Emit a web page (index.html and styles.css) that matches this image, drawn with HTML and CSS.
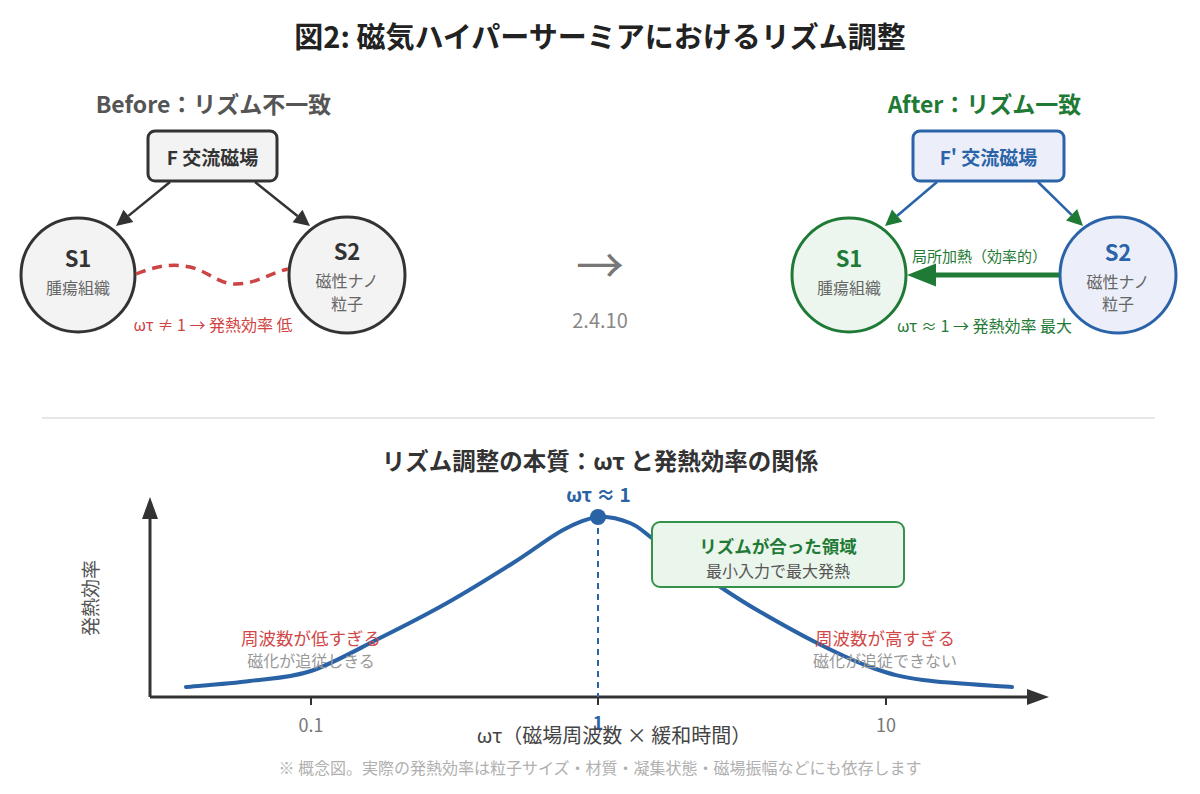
FILE: index.html
```html
<!DOCTYPE html>
<html lang="ja">
<head>
<meta charset="utf-8">
<title>図2: 磁気ハイパーサーミアにおけるリズム調整</title>
<link rel="stylesheet" href="styles.css">
</head>
<body>
<main class="page">
  <h1 class="title">図2: 磁気ハイパーサーミアにおけるリズム調整</h1>

  <section class="compare">
    <svg class="diagram" width="430" height="345" viewBox="0 55 430 345">
      <text class="head head-before" x="213.5" y="103">Before：リズム不一致</text>

      <rect class="box box-before" x="148" y="131" width="129" height="50" rx="7"/>
      <text class="box-label label-dark" x="212.5" y="156">F 交流磁場</text>

      <line class="link-dark" x1="170" y1="182" x2="128.4" y2="215.9"/>
      <polygon class="head-dark" points="116,226 133.4,222.1 123.4,209.7"/>
      <line class="link-dark" x1="255" y1="182" x2="297.5" y2="216"/>
      <polygon class="head-dark" points="310,226 292.5,222.2 302.5,209.8"/>

      <circle class="node node-before" cx="78" cy="275" r="57"/>
      <circle class="node node-before" cx="347" cy="275" r="58"/>

      <path class="wave" d="M136,274 C156,266 172,263 190,267 C210,272 218,284 236,284 C256,284 270,273 288,269"/>

      <text class="node-name label-dark" x="78" y="257">S1</text>
      <text class="node-sub" x="78" y="287">腫瘍組織</text>
      <text class="node-name label-dark" x="347" y="250">S2</text>
      <text class="node-sub" x="347" y="280">磁性ナノ</text>
      <text class="node-sub" x="347" y="303">粒子</text>

      <text class="edge-note note-red" x="213" y="324">ωτ ≠ 1 → 発熱効率 低</text>
    </svg>

    <div class="transition">
      <span class="transition-arrow">→</span>
      <span class="transition-label">2.4.10</span>
    </div>

    <svg class="diagram" width="430" height="345" viewBox="770 55 430 345">
      <text class="head head-after" x="984.5" y="103">After：リズム一致</text>

      <rect class="box box-after" x="913" y="131" width="151" height="50" rx="7"/>
      <text class="box-label label-blue" x="988.5" y="156">F' 交流磁場</text>

      <line class="link-blue" x1="937" y1="182" x2="897.2" y2="215.7"/>
      <polygon class="head-green" points="885,226 902.4,221.8 892,209.6"/>
      <line class="link-blue" x1="1038" y1="182" x2="1071.6" y2="214.8"/>
      <polygon class="head-green" points="1083,226 1066,220.5 1077.2,209.1"/>

      <circle class="node node-green" cx="849" cy="275" r="57"/>
      <circle class="node node-blue" cx="1118" cy="275" r="58"/>

      <line class="heat-line" x1="1059" y1="275" x2="932" y2="275"/>
      <polygon class="head-green" points="907,275 936,263.5 936,286.5"/>

      <text class="edge-note edge-note-small note-green" x="979.5" y="255">局所加熱（効率的）</text>

      <text class="node-name label-green" x="849" y="257">S1</text>
      <text class="node-sub" x="849" y="287">腫瘍組織</text>
      <text class="node-name label-blue" x="1118" y="251">S2</text>
      <text class="node-sub" x="1118" y="281">磁性ナノ</text>
      <text class="node-sub" x="1118" y="303">粒子</text>

      <text class="edge-note note-green" x="984.5" y="325">ωτ ≈ 1 → 発熱効率 最大</text>
    </svg>
  </section>

  <div class="divider"></div>

  <h2 class="chart-title">リズム調整の本質：ωτ と発熱効率の関係</h2>

  <svg class="chart" width="1200" height="278" viewBox="0 474 1200 278">
    <line class="axis" x1="150" y1="697" x2="150" y2="516"/>
    <polygon class="axis-head" points="150,497 142,519 158,519"/>
    <line class="axis" x1="150" y1="697" x2="1030" y2="697"/>
    <polygon class="axis-head" points="1049,697 1027,689 1027,705"/>

    <line class="tick" x1="311" y1="697" x2="311" y2="705"/>
    <line class="tick" x1="598" y1="697" x2="598" y2="705"/>
    <line class="tick" x1="886" y1="697" x2="886" y2="705"/>

    <line class="peak-guide" x1="598" y1="517" x2="598" y2="697"/>

    <path class="curve" d="M186,687 C196.7,686 229.2,683.7 250,681 C270.8,678.3 289.3,678.2 311,671 C332.7,663.8 357.3,649.3 380,638 C402.7,626.7 424.8,615.5 447,603 C469.2,590.5 493.7,575.2 513,563 C532.3,550.8 548.8,537.7 563,530 C577.2,522.3 586.8,518.2 598,517 C609.2,515.8 621,519.5 630,523 C639,526.5 642.5,531.2 652,538 C661.5,544.8 675.3,555.7 687,564 C698.7,572.3 710.3,580.3 722,588 C733.7,595.7 741.2,600.8 757,610 C772.8,619.2 797.7,633.3 817,643 C836.3,652.7 855.3,661.8 873,668 C890.7,674.2 899.8,676.8 923,680 C946.2,683.2 997.2,685.8 1012,687"/>

    <circle class="peak-dot" cx="598" cy="517" r="8"/>
    <text class="peak-label" x="598.5" y="493">ωτ ≈ 1</text>

    <rect class="zone" x="652" y="522" width="252" height="65" rx="8"/>
    <text class="zone-title" x="778" y="545">リズムが合った領域</text>
    <text class="zone-sub" x="778" y="570">最小入力で最大発熱</text>

    <text class="range-title" x="311" y="637">周波数が低すぎる</text>
    <text class="range-sub" x="311" y="660">磁化が追従しきる</text>
    <text class="range-title" x="885" y="637">周波数が高すぎる</text>
    <text class="range-sub" x="885" y="660">磁化が追従できない</text>

    <text class="tick-label" x="311" y="724">0.1</text>
    <text class="tick-label tick-label-key" x="598" y="722">1</text>
    <text class="tick-label" x="886" y="724">10</text>

    <text class="axis-label axis-label-y" x="89" y="598" transform="rotate(-90 89 598)">発熱効率</text>
    <text class="axis-label axis-label-x" x="614" y="734">ωτ（磁場周波数 × 緩和時間）</text>
  </svg>

  <p class="note">※ 概念図。実際の発熱効率は粒子サイズ・材質・凝集状態・磁場振幅などにも依存します</p>
</main>
</body>
</html>
```

FILE: styles.css
```css
html, body {
  margin: 0;
  padding: 0;
  background: #ffffff;
}

body {
  font-family: "Noto Sans CJK JP", "Noto Sans", sans-serif;
  color: #333333;
}

.page {
  width: 1200px;
  height: 794px;
  overflow: hidden;
}

.title {
  margin: 0;
  padding-top: 15px;
  font-size: 29px;
  line-height: 40px;
  font-weight: 700;
  text-align: center;
  color: #222222;
}

.compare {
  display: flex;
  height: 345px;
}

.diagram {
  display: block;
  flex: none;
}

.transition {
  width: 340px;
  flex: none;
  display: flex;
  flex-direction: column;
  align-items: center;
  padding-top: 183px;
  gap: 22px;
  box-sizing: border-box;
}

.transition-arrow {
  font-size: 48px;
  line-height: 48px;
  color: #777777;
}

.transition-label {
  font-size: 20px;
  line-height: 24px;
  color: #888888;
}

.divider {
  height: 2px;
  margin: 17px 45px 0 42px;
  background: #e6e6e6;
}

.chart-title {
  margin: 27px 0 0;
  font-size: 23.5px;
  line-height: 28px;
  font-weight: 700;
  text-align: center;
  color: #333333;
}

.chart {
  display: block;
}

.note {
  margin: 5px 0 0;
  font-size: 16px;
  line-height: 20px;
  text-align: center;
  color: #b0b0b0;
}

/* ---------- SVG text ---------- */
svg text {
  text-anchor: middle;
  dominant-baseline: central;
  font-family: "Noto Sans CJK JP", "Noto Sans", sans-serif;
}

.head {
  font-size: 23px;
  font-weight: 700;
}
.head-before { fill: #555555; }
.head-after { fill: #1f7a36; }

.box-label {
  font-size: 19px;
  font-weight: 700;
}

.label-dark { fill: #333333; }
.label-blue { fill: #2a63a8; }
.label-green { fill: #1f7a36; }

.node-name {
  font-size: 22px;
  font-weight: 700;
}

.node-sub {
  font-size: 16px;
  fill: #666666;
}

.edge-note {
  font-size: 16px;
}
.edge-note-small {
  font-size: 15px;
}
.note-red { fill: #cf4343; }
.note-green { fill: #1f7a36; }

/* ---------- SVG shapes ---------- */
.box {
  stroke-width: 3;
}
.box-before {
  fill: #f3f3f3;
  stroke: #333333;
}
.box-after {
  fill: #eceff9;
  stroke: #2a63a8;
}

.node {
  stroke-width: 3;
}
.node-before {
  fill: #f3f3f3;
  stroke: #333333;
}
.node-green {
  fill: #edf6ee;
  stroke: #1f7a36;
}
.node-blue {
  fill: #eceff9;
  stroke: #2a63a8;
}

.link-dark {
  stroke: #333333;
  stroke-width: 2.5;
}
.head-dark { fill: #333333; }

.link-blue {
  stroke: #2a63a8;
  stroke-width: 2.5;
}
.head-green { fill: #1f7a36; }

.heat-line {
  stroke: #1f7a36;
  stroke-width: 5;
}

.wave {
  fill: none;
  stroke: #cc4444;
  stroke-width: 3.5;
  stroke-dasharray: 10 7;
}

/* ---------- chart ---------- */
.axis {
  stroke: #333333;
  stroke-width: 3;
}
.axis-head { fill: #333333; }

.tick {
  stroke: #333333;
  stroke-width: 2;
}

.peak-guide {
  stroke: #2a63a8;
  stroke-width: 2;
  stroke-dasharray: 6 5;
}

.curve {
  fill: none;
  stroke: #2a62a6;
  stroke-width: 4;
  stroke-linecap: round;
}

.peak-dot { fill: #2a62a6; }

.peak-label {
  font-size: 19px;
  font-weight: 700;
  fill: #2a62a6;
}

.zone {
  fill: #eaf5eb;
  stroke: #36914d;
  stroke-width: 2;
}

.zone-title {
  font-size: 17.5px;
  font-weight: 700;
  fill: #1f7a36;
}

.zone-sub {
  font-size: 16px;
  fill: #555555;
}

.range-title {
  font-size: 17.5px;
  fill: #d04848;
}

.range-sub {
  font-size: 16px;
  fill: #999999;
}

.tick-label {
  font-size: 18px;
  fill: #777777;
}
.tick-label-key {
  font-weight: 700;
  fill: #2a62a6;
}

.axis-label {
  font-size: 18px;
  fill: #555555;
}
.axis-label-y {
  font-size: 19px;
}
.axis-label-x {
  font-size: 20px;
  fill: #444444;
}
```
